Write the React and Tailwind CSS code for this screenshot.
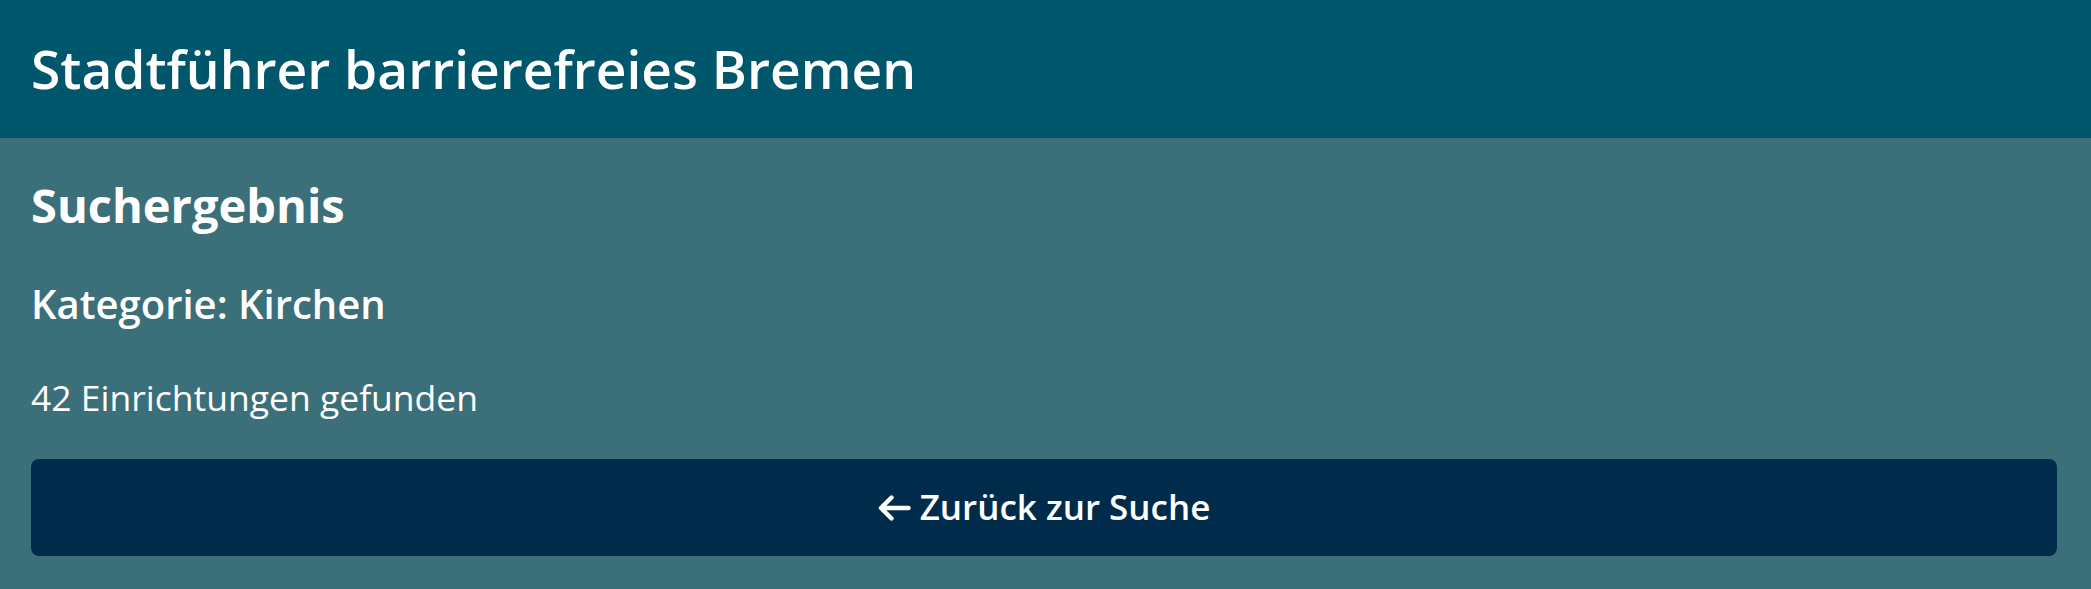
const ArrowLeft = () => (
  <svg width="33" height="26" viewBox="0 0 33 26" fill="none" className="shrink-0">
    <path d="M30.5 13H3.5M13.5 2.5 3 13l10.5 10.5" stroke="white" strokeWidth="4.4" strokeLinecap="round" strokeLinejoin="round" />
  </svg>
)

const App = () => {
  return (
    <div className="min-h-screen flex flex-col bg-[#3b6f79] text-white font-['Open_Sans',sans-serif]">
      <header className="h-[138px] shrink-0 bg-[#00566a] flex items-center pl-[31px]">
        <h1 className="text-[53.3px] font-semibold leading-normal">Stadtführer barrierefreies Bremen</h1>
      </header>

      <main className="flex-1 pl-[31px] pr-[34px] pt-[38px] pb-[32px]">
        <h2 className="text-[47px] font-bold leading-[58px]">Suchergebnis</h2>
        <h3 className="mt-[47px] text-[40px] font-semibold leading-[46px]">Kategorie: Kirchen</h3>
        <p className="mt-[50px] text-[35.5px] leading-[40px]">42 Einrichtungen gefunden</p>
        <button className="mt-[42px] w-full h-[97px] rounded-[8px] bg-[#002b4b] flex items-center justify-center gap-[9px] text-[35px] font-semibold">
          <ArrowLeft />
          <span className="leading-normal">Zurück zur Suche</span>
        </button>
      </main>
    </div>
  )
}

export default App
